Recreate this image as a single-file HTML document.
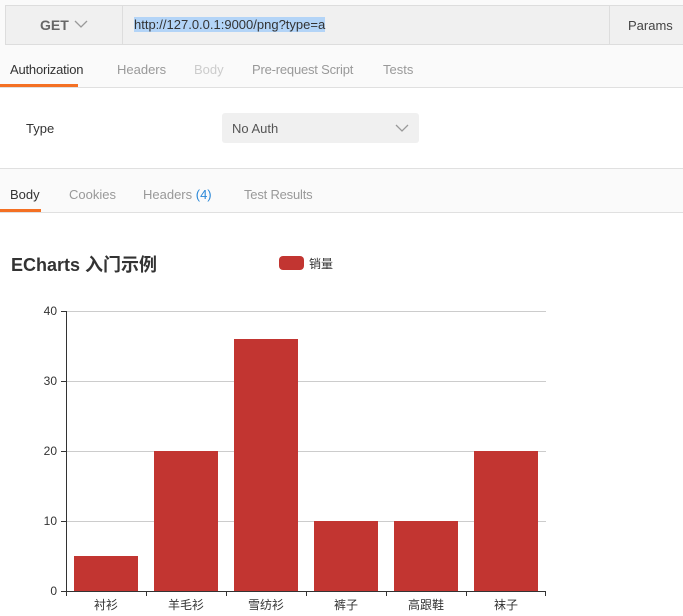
<!DOCTYPE html>
<html><head><meta charset="utf-8"><style>
*{margin:0;padding:0;box-sizing:border-box}
body{width:683px;height:616px;overflow:hidden;background:#fff;font-family:"Liberation Sans","Noto Sans CJK SC",sans-serif;position:relative;font-size:12px;color:#333}
.a{position:absolute}
</style></head><body>
<div class="a" style="left:0;top:0;width:683px;height:88px;background:#fafafa"></div>
<div class="a" style="left:5px;top:5px;width:690px;height:40px;border:1px solid #ddd;background:#f0f0f0"></div>
<div class="a" style="left:40px;top:17px;font-size:14px;font-weight:bold;color:#666">GET</div>
<svg class="a" style="left:74px;top:19px" width="14" height="10"><path d="M1 2 L7 8 L13 2" fill="none" stroke="#999" stroke-width="1.3"/></svg>
<div class="a" style="left:122px;top:6px;width:488px;height:38px;border-left:1px solid #ddd;border-right:1px solid #ddd;background:#f0f0f0"></div>
<div class="a" style="left:134px;top:17px;font-size:13px;color:#333;background:#b3d4f7;line-height:15px">http://127.0.0.1:9000/png?type=a</div>
<div class="a" style="left:628px;top:18px;font-size:13px;color:#444">Params</div>
<div class="a" style="left:10px;top:62px;font-size:13px;color:#333;letter-spacing:-0.2px">Authorization</div>
<div class="a" style="left:117px;top:62px;font-size:13px;color:#999">Headers</div>
<div class="a" style="left:194px;top:62px;font-size:13px;color:#ccc">Body</div>
<div class="a" style="left:252px;top:62px;font-size:13px;color:#999;letter-spacing:-0.2px">Pre-request Script</div>
<div class="a" style="left:383px;top:62px;font-size:13px;color:#999">Tests</div>
<div class="a" style="left:0;top:84px;width:78px;height:3px;background:#f47023"></div>
<div class="a" style="left:0;top:87px;width:683px;height:1px;background:#e0e0e0"></div>
<div class="a" style="left:26px;top:121px;font-size:13px;color:#333">Type</div>
<div class="a" style="left:222px;top:113px;width:197px;height:30px;background:#f0f0f0;border-radius:3px"></div>
<div class="a" style="left:232px;top:121px;font-size:13px;color:#555">No Auth</div>
<svg class="a" style="left:395px;top:123px" width="14" height="10"><path d="M1 2 L7 8 L13 2" fill="none" stroke="#999" stroke-width="1.3"/></svg>
<div class="a" style="left:0;top:168px;width:683px;height:45px;background:#fafafa;border-top:1px solid #e0e0e0"></div>
<div class="a" style="left:10px;top:187px;font-size:13px;color:#333">Body</div>
<div class="a" style="left:69px;top:187px;font-size:13px;color:#999">Cookies</div>
<div class="a" style="left:143px;top:187px;font-size:13px;color:#999">Headers <span style="color:#2a88d8">(4)</span></div>
<div class="a" style="left:244px;top:187px;font-size:13px;color:#999;letter-spacing:-0.2px">Test Results</div>
<div class="a" style="left:0;top:209px;width:41px;height:3px;background:#f47023"></div>
<div class="a" style="left:0;top:212px;width:683px;height:1px;background:#e0e0e0"></div>
<div class="a" style="left:11px;top:251px;font-size:18px;font-weight:bold;color:#333">ECharts 入门示例</div>
<div class="a" style="left:279px;top:256px;width:25px;height:14px;background:#c23531;border-radius:4px"></div>
<div class="a" style="left:309px;top:255px;font-size:12px;color:#333">销量</div>
<svg class="a" style="left:0;top:0" width="683" height="616" font-family="Liberation Sans,Noto Sans CJK SC,sans-serif" font-size="12" fill="#333">
<g stroke="#ccc" stroke-width="1">
<line x1="66" y1="311.5" x2="546" y2="311.5"/><line x1="66" y1="381.5" x2="546" y2="381.5"/><line x1="66" y1="451.5" x2="546" y2="451.5"/><line x1="66" y1="521.5" x2="546" y2="521.5"/>
</g>
<g fill="#c23531">
<rect x="74" y="556" width="64" height="35"/><rect x="154" y="451" width="64" height="140"/><rect x="234" y="339" width="64" height="252"/><rect x="314" y="521" width="64" height="70"/><rect x="394" y="521" width="64" height="70"/><rect x="474" y="451" width="64" height="140"/>
</g>
<g stroke="#333" stroke-width="1">
<line x1="66.5" y1="311" x2="66.5" y2="591"/><line x1="66" y1="591.5" x2="546" y2="591.5"/>
<line x1="61" y1="311.5" x2="66" y2="311.5"/><line x1="61" y1="381.5" x2="66" y2="381.5"/><line x1="61" y1="451.5" x2="66" y2="451.5"/><line x1="61" y1="521.5" x2="66" y2="521.5"/><line x1="61" y1="591.5" x2="66" y2="591.5"/>
<line x1="66.5" y1="591" x2="66.5" y2="596"/><line x1="146.5" y1="591" x2="146.5" y2="596"/><line x1="226.5" y1="591" x2="226.5" y2="596"/><line x1="306.5" y1="591" x2="306.5" y2="596"/><line x1="386.5" y1="591" x2="386.5" y2="596"/><line x1="466.5" y1="591" x2="466.5" y2="596"/><line x1="545.5" y1="591" x2="545.5" y2="596"/>
</g>
<g text-anchor="end"><text x="57" y="315">40</text><text x="57" y="385">30</text><text x="57" y="455">20</text><text x="57" y="525">10</text><text x="57" y="595">0</text></g>
<g text-anchor="middle"><text x="106" y="609">衬衫</text><text x="186" y="609">羊毛衫</text><text x="266" y="609">雪纺衫</text><text x="346" y="609">裤子</text><text x="426" y="609">高跟鞋</text><text x="506" y="609">袜子</text></g>
</svg>
</body></html>
